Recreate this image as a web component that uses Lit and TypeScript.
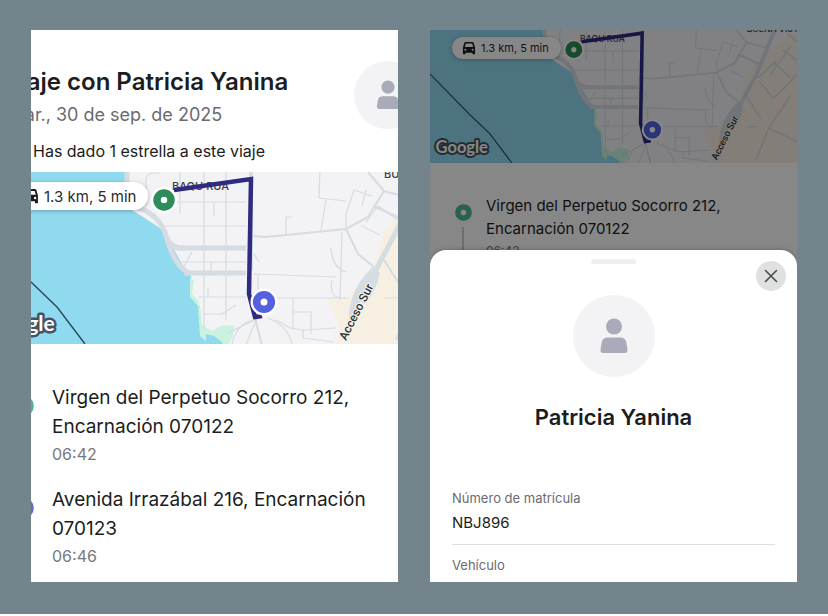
import { LitElement, html, css, svg } from "lit";
import { customElement, property } from "lit/decorators.js";

@customElement("trip-map")
class TripMap extends LitElement {
  @property() view = "31 172 367 172";

  static styles = css`
    :host { display: block; overflow: hidden; }
    svg { display: block; width: 100%; height: auto; }
    .label { font: 500 11px Inter, sans-serif; fill: #3c4043; }
    .road-name {
      font: 500 12px Roboto, sans-serif; fill: #2f3235; stroke: #f6f3ee;
      stroke-width: 2px; paint-order: stroke;
    }
    .brand {
      font: 700 21px Lato, sans-serif; fill: #fff; stroke: #43545f;
      stroke-width: 5px; stroke-linejoin: round; paint-order: stroke;
    }
  `;

  render() {
    return html`<svg viewBox=${this.view} role="img" aria-label="Mapa del viaje">
      ${svg`
      <rect x="-20" y="165" width="480" height="190" fill="#f3f2f5"/>
      <path d="M384 232 L398 214 L420 196 L440 180 L460 180 L460 350 L334 350 L340 330 L328 299 L345 300 L366 280 L376 262 Z" fill="#f7f0e2"/>
      <path d="M-20 165 H126 L125 206 L140 215 L160 228 L172 246 L182 264 L191 276 L192 297 L200 306 L201 330 L214 340 L222 350 H-20 Z" fill="#90daf0"/>
      <path d="M190 278 L194 280 L192 294 L199 302 L202 325 L212 331 L222 325 L234 326 L233 336 L226 350 L216 350 L200 336 L198 306 L190 297 Z" fill="#c9f3de"/>
      <path d="M198 304 L200 306 L204 322 L212 330 L222 325 L220 310 L200 300 Z" fill="#f3f2f5"/>
      <path d="M206 334 L214 336 L222 342 L226 350 L206 350 Z" fill="#90daf0"/>
      <g fill="none" stroke="#d5dce2" stroke-linejoin="round">
        <g stroke-width="1.2">
          <path d="M146 206 V178 Q148 173 154 173 H160 M180 170 V214 M204 170 V330 M226 170 V320 M165 226 H246 M160 202 H246 M176 262 H246 M198 297 H246 M204 314 H222 M192 252 L183 268 M214 202 V216 M211 262 V276 M208 297 V288"/>
          <path d="M254 274 L336 277 M320 170 L319 198 L346 201 M326 200 L321 230 M286 235 V217 H292 M342 232 L340 300 M258 275 V292 M270 298 H348 M293 298 V330 M293 312 H311 V334 M276 320 L290 328 L303 330 V338 L334 342 M303 330 L336 328 M331 248 Q332 268 346 272 M332 280 Q328 300 346 298 M254 254 L259 262"/>
          <path d="M354 190 L346 214 V230 M354 190 L372 196 M362 206 L366 190 M366 222 L378 206 L398 220 M362 226 L380 235 M384 298 H398"/>
          <path d="M254 320 Q236 324 232 344 M256 320 L244 350 M258 318 L226 334 M268 318 Q288 326 292 344 M222 314 L236 305"/>
        </g>
        <g stroke-width="2">
          <path d="M252 236 L266 237 L346 229 L368 217 L384 191 L368 172 M384 191 L410 198 M373 206 L402 219 M346 229 L358 254 L374 267 M374 267 L366 276 M255 318 L263 350 M384 260 L402 288 M398 236 L422 214 M414 232 L440 196 M440 258 L412 300 L396 340 M412 300 L450 318 M400 240 L418 262 L470 210"/>
          <path d="M430 200 L458 222 M418 216 L440 236 M436 180 L460 200"/>
        </g>
        <g stroke-width="5"><path d="M174 248 H246 M184 273 H246"/></g>
        <path stroke-width="5" d="M127 170 V206 M126 204 Q156 210 165 232 Q174 268 190 273 M166 236 Q170 248 184 248"/>
        <path stroke-width="5" d="M421 172 L398 228 L376 270 L356 304 L348 330"/>
        <path stroke-width="6" d="M372 272 Q352 292 352 318 M377 272 Q374 290 362 302"/>
        <path stroke-width="4" d="M251 170 V270"/>
      </g>
      <path d="M-20 230 L31 282 L57 307 L85 344" fill="none" stroke="#294b58" stroke-width="1.400"/>
      <text class="label" x="172" y="190">BAQU RUA</text>
      <text class="label" x="384" y="178">BUENA VISTA</text>
      <text class="road-name" transform="translate(346 341) rotate(-63)">Acceso Sur</text>
      <path d="M174 190 L251 179 L249 294 L255 317 L262 316" fill="none" stroke="#2f2b80" stroke-width="4.500"/>
      <g><circle cx="164" cy="200" r="13" fill="#fff"/><circle cx="164" cy="200" r="7" fill="none" stroke="#2c8c5a" stroke-width="7.500"/></g>
      <g><circle cx="264" cy="302" r="13.500" fill="#fff"/><circle cx="264" cy="302" r="7.300" fill="none" stroke="#5560e0" stroke-width="7.600"/></g>
      <text class="brand" x="-12" y="331">Google</text>
      `}
    </svg>`;
  }
}

@customElement("app-root")
class AppRoot extends LitElement {
  static styles = css`
    :host { display: block; font-family: Inter, sans-serif; color: #1b1d20; }
    h1, h2, p, dl, dd, dt, ol { margin: 0; padding: 0; }
    .page {
      box-sizing: border-box; display: grid; grid-template-columns: 1fr 1fr; gap: 32px;
      padding: 30px 31px 32px; background: #73848c;
    }
    .shot { background: #fff; overflow: hidden; min-width: 0; }

    .head { position: relative; padding: 36px 0 5px; }
    .bleed { display: flex; flex-direction: column; align-items: flex-start; white-space: nowrap; }
    h1 { font-size: 24px; line-height: 32px; font-weight: 600; margin-left: -28px; }
    .date { font-size: 18px; line-height: 34px; color: #6a6b70; margin-left: -22px; }
    .rated { font-size: 16px; line-height: 32px; margin-left: 2px; padding-top: 3px; }
    .avatar { display: block; }
    .head .avatar { position: absolute; top: 31px; right: -24px; width: 68px; height: 68px; }

    .map { position: relative; }
    .chip {
      position: absolute; display: flex; align-items: center; background: #fff;
      white-space: nowrap; color: #2a2b2e; box-shadow: 0 1px 4px #0004;
    }
    .chip.large { left: -22px; top: 10px; gap: 5px; height: 28px; padding: 0 12px 0 14px; border-radius: 14px; font-size: 15px; }
    .chip.small { left: 22px; top: 7px; gap: 5px; height: 22px; padding: 0 12px 0 10px; border-radius: 11px; font-size: 11px; }
    .chip.large svg { width: 16px; height: 16px; }
    .chip.small svg { width: 14px; height: 14px; }

    .stops { list-style: none; }
    .stop { display: flex; position: relative; }
    .stop svg { flex: none; display: block; }
    .large-stops { padding: 39px 0 10px; display: flex; flex-direction: column; gap: 18px; }
    .large-stops .stop { gap: 18px; font-size: 19px; line-height: 29px; margin-left: -19px; }
    .large-stops svg { width: 22px; height: 22px; padding-top: 12px; }
    .large-stops .time { font-size: 16px; line-height: 26px; color: #77787c; }

    .behind { position: relative; }
    .small-stops { padding: 31px 0 0 25px; height: 56px; overflow: hidden; }
    .small-stops .stop { gap: 14px; font-size: 15px; line-height: 23px; }
    .small-stops svg { width: 17px; height: 17px; padding-top: 10px; }
    .small-stops .time { font-size: 12px; line-height: 22px; color: #77787c; }
    .small-stops .stop::before { content: ""; position: absolute; left: 7px; top: 33px; width: 2px; height: 40px; background: #d0d0d4; }
    .scrim { position: absolute; inset: 0 0 -20px; background: rgb(0 0 0 / 47%); }

    .sheet {
      position: relative; background: #fff; border-radius: 16px 16px 0 0;
      display: flex; flex-direction: column; align-items: center; padding: 9px 22px 5px;
      box-shadow: 0 -1px 4px #0003;
    }
    .grip { width: 45px; height: 5px; border-radius: 3px; background: #efeff0; }
    .close {
      position: absolute; top: 11px; right: 11px; width: 30px; height: 30px; padding: 0;
      border: 0; border-radius: 50%; background: #dfe0e0; display: grid; place-items: center;
    }
    .close svg { width: 14px; height: 14px; }
    .sheet .avatar { width: 82px; height: 82px; margin-top: 31px; }
    h2 { font-size: 22px; line-height: 32px; font-weight: 600; margin-top: 24px; }
    dl { align-self: stretch; padding-top: 53px; }
    .row { padding-bottom: 8px; }
    .row + .row { border-top: 1px solid #dedfe0; padding: 8px 0 0; }
    dt { font-size: 13px; line-height: 24px; color: #6a6b70; }
    dd { font-size: 15px; line-height: 26px; }
  `;

  avatar() {
    return html`<svg class="avatar" viewBox="0 0 82 82" role="img" aria-label="Foto de perfil">
      <circle cx="41" cy="41" r="41" fill="#f3f3f6"/>
      <circle cx="41" cy="31.500" r="8" fill="#a9abb8"/>
      <path d="M35 42.500h12q5.500 0 6.300 5l1.200 7q.3 3.500-3 3.500h-21q-3.300 0-3-3.500l1.200-7q.8-5 6.300-5z" fill="#a9abb8"/>
    </svg>`;
  }

  car() {
    return html`<svg viewBox="0 0 15 15" aria-hidden="true">
      <path fill-rule="evenodd" d="M4 1h7q1.200 0 1.600 1.200L14 7v6.500q0 .8-.8.800h-1.200q-.8 0-.8-.8V12.500H3.800v1q0 .8-.8.800H1.800q-.8 0-.8-.8V7l1.400-4.800Q2.800 1 4 1zM4.100 2.700L3 6.300h9l-1.100-3.600zM3.600 8.300a1.100 1.100 0 1 0 0 2.200a1.100 1.100 0 0 0 0-2.200zM11.400 8.300a1.100 1.100 0 1 0 0 2.200a1.100 1.100 0 0 0 0-2.200z" fill="#1b1d20"/>
    </svg>`;
  }

  chip(size: string) {
    return html`<div class="chip ${size}">${this.car()}<span>1.3 km, 5 min</span></div>`;
  }

  stop(color: string, address: string, time: string) {
    return html`<li class="stop">
      <svg viewBox="0 0 22 22" aria-hidden="true"><circle cx="11" cy="11" r="7.200" fill="none" stroke=${color} stroke-width="7.200"/></svg>
      <div><p>${address}</p><p class="time">${time}</p></div>
    </li>`;
  }

  render() {
    return html`<main class="page">
      <section class="shot">
        <header class="head">
          <div class="bleed">
            <h1>Viaje con Patricia Yanina</h1>
            <p class="date">mar., 30 de sep. de 2025</p>
            <p class="rated">Has dado 1 estrella a este viaje</p>
          </div>
          ${this.avatar()}
        </header>
        <div class="map"><trip-map></trip-map>${this.chip("large")}</div>
        <ol class="stops large-stops">
          ${this.stop("#4fb78c", "Virgen del Perpetuo Socorro 212, Encarnación 070122", "06:42")}
          ${this.stop("#6369d1", "Avenida Irrazábal 216, Encarnación 070123", "06:46")}
        </ol>
      </section>
      <section class="shot">
        <div class="behind">
          <div class="map"><trip-map view="-19 175 467 169"></trip-map>${this.chip("small")}</div>
          <ol class="stops small-stops">
            ${this.stop("#4fb78c", "Virgen del Perpetuo Socorro 212, Encarnación 070122", "06:42")}
          </ol>
          <div class="scrim"></div>
        </div>
        <div class="sheet">
          <div class="grip"></div>
          <button class="close" aria-label="Cerrar">
            <svg viewBox="0 0 14 14"><path d="M1.500 1.500l11 11M12.500 1.500l-11 11" stroke="#4a4c4e" stroke-width="1.600" stroke-linecap="round"/></svg>
          </button>
          ${this.avatar()}
          <h2>Patricia Yanina</h2>
          <dl>
            <div class="row"><dt>Número de matrícula</dt><dd>NBJ896</dd></div>
            <div class="row"><dt>Vehículo</dt></div>
          </dl>
        </div>
      </section>
    </main>`;
  }
}
